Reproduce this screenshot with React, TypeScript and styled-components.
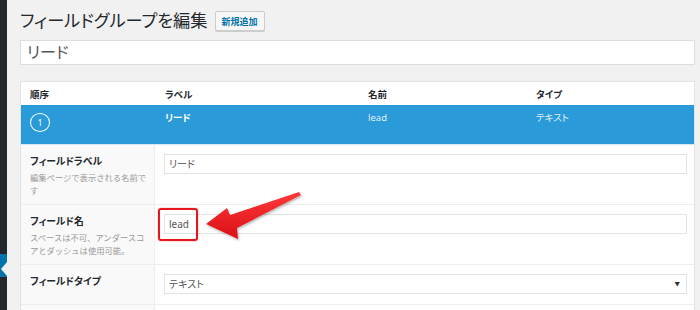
import React from "react";
import styled, { createGlobalStyle } from "styled-components";

const Global = createGlobalStyle`
  html, body { margin: 0; padding: 0; background: #f1f1f1; }
  body {
    font-family: "Noto Sans", "Noto Sans CJK JP", sans-serif;
    font-feature-settings: "palt";
    color: #23282d;
    width: 700px; height: 310px; overflow: hidden;
  }
  * { box-sizing: border-box; }
`;

const Page = styled.div`
  position: relative;
  display: flex;
  width: 700px;
  height: 310px;
  overflow: hidden;
`;

const Sidebar = styled.div`
  width: 7px;
  flex: none;
  background: #23282d;
  display: flex;
  flex-direction: column;
`;

const SideSpacer = styled.div`
  height: 254px;
`;

const SideCurrent = styled.div`
  position: relative;
  height: 23px;
  background: #0073aa;
  &::after {
    content: "";
    position: absolute;
    right: 0;
    top: 8px;
    border-style: solid;
    border-width: 7px 6px 7px 0;
    border-color: transparent #f1f1f1 transparent transparent;
  }
`;

const Main = styled.div`
  flex: 1;
  padding: 10px 5px 0 13px;
  display: flex;
  flex-direction: column;
`;

const TitleRow = styled.div`
  display: flex;
  align-items: center;
  gap: 7px;
  height: 22px;
`;

const Title = styled.h1`
  margin: 0;
  font-size: 17.2px;
  font-weight: 400;
  color: #23282d;
  line-height: 22px;
`;

const AddButton = styled.span`
  display: inline-flex;
  align-items: center;
  justify-content: center;
  height: 20px;
  padding: 0 6px;
  border: 1px solid #cccccc;
  border-radius: 2px;
  background: #f7f7f7;
  color: #0073aa;
  font-size: 9px;
  font-weight: 700;
  box-shadow: 0 1px 0 #ccc;
`;

const TitleInput = styled.div`
  margin-top: 8px;
  height: 26px;
  background: #fff;
  border: 1px solid #dddddd;
  padding: 0 6px;
  font-size: 16px;
  line-height: 23px;
  color: #555;
`;

const Table = styled.div`
  margin-top: 16px;
  background: #fff;
  border: 1px solid #e3e3e3;
  border-bottom: none;
  display: flex;
  flex-direction: column;
`;

const Grid = styled.div<{ $bg?: string; $h: number; $color?: string }>`
  display: grid;
  grid-template-columns: 134px 203px 168px 1fr;
  height: ${(p) => p.$h}px;
  background: ${(p) => p.$bg || "#fff"};
  color: ${(p) => p.$color || "#23282d"};
`;

const HeadCell = styled.div`
  padding-left: 10px;
  font-size: 9.5px;
  font-weight: 700;
  display: flex;
  align-items: center;
  &:first-child { padding-left: 9px; }
`;

const BlueCell = styled.div<{ $bold?: boolean }>`
  padding: 6px 0 0 10px;
  font-size: 9.5px;
  font-weight: ${(p) => (p.$bold ? 700 : 400)};
  line-height: 14px;
  color: ${(p) => (p.$bold ? "#fff" : "rgba(255,255,255,0.88)")};
`;

const OrderCell = styled.div`
  padding: 8px 0 0 9px;
`;

const Circle = styled.div`
  width: 20px;
  height: 19px;
  border: 1.5px solid #fff;
  border-radius: 50%;
  display: flex;
  align-items: center;
  justify-content: center;
  font-size: 9px;
  color: #fff;
`;

const Details = styled.div`
  border-top: 1px solid #d4e9f7;
  display: flex;
  flex-direction: column;
`;

const FieldRow = styled.div<{ $h: number }>`
  display: grid;
  grid-template-columns: 134px 1fr;
  height: ${(p) => p.$h}px;
  border-bottom: 1px solid #eeeeee;
`;

const LabelCol = styled.div<{ $top?: number }>`
  background: #f9f9f9;
  border-right: 1px solid #eeeeee;
  padding: ${(p) => p.$top ?? 10}px 3px 0 9px;
`;

const FieldLabel = styled.div`
  font-size: 9.8px;
  font-weight: 700;
  color: #23282d;
  line-height: 14px;
`;

const FieldDesc = styled.div`
  font-size: 8.3px;
  font-feature-settings: normal;
  color: #999;
  line-height: 13px;
  margin-top: 2px;
`;

const InputCol = styled.div`
  padding: 9px 7px 0 9px;
`;

const TextBox = styled.div`
  height: 20px;
  border: 1px solid #e2e2e2;
  background: #fff;
  padding: 0 4px;
  font-size: 10px;
  line-height: 18px;
  color: #555;
  display: flex;
  align-items: center;
  justify-content: space-between;
`;

const Caret = styled.span`
  font-size: 5.5px;
  color: #333;
  margin-right: 2px;
`;

const Overlay = styled.svg`
  position: absolute;
  left: 0;
  top: 0;
  pointer-events: none;
`;

const Highlight = styled.div`
  position: absolute;
  left: 158px;
  top: 208px;
  width: 40px;
  height: 33px;
  border: 2px solid #e5161d;
  border-radius: 3px;
  box-shadow: 0 0 2px rgba(229, 22, 29, 0.4);
`;

export default function App() {
  return (
    <>
      <Global />
      <Page>
        <Sidebar>
          <SideSpacer />
          <SideCurrent />
        </Sidebar>
        <Main>
          <TitleRow>
            <Title>フィールドグループを編集</Title>
            <AddButton>新規追加</AddButton>
          </TitleRow>
          <TitleInput>リード</TitleInput>
          <Table>
            <Grid $h={23}>
              <HeadCell>順序</HeadCell>
              <HeadCell>ラベル</HeadCell>
              <HeadCell>名前</HeadCell>
              <HeadCell>タイプ</HeadCell>
            </Grid>
            <Grid $h={39} $bg="#2a9bd8" $color="#fff">
              <OrderCell>
                <Circle>1</Circle>
              </OrderCell>
              <BlueCell $bold>リード</BlueCell>
              <BlueCell>lead</BlueCell>
              <BlueCell>テキスト</BlueCell>
            </Grid>
            <Details>
              <FieldRow $h={60}>
                <LabelCol>
                  <FieldLabel>フィールドラベル</FieldLabel>
                  <FieldDesc>編集ページで表示される名前です</FieldDesc>
                </LabelCol>
                <InputCol>
                  <TextBox>リード</TextBox>
                </InputCol>
              </FieldRow>
              <FieldRow $h={60}>
                <LabelCol>
                  <FieldLabel>フィールド名</FieldLabel>
                  <FieldDesc>スペースは不可、アンダースコアとダッシュは使用可能。</FieldDesc>
                </LabelCol>
                <InputCol>
                  <TextBox>lead</TextBox>
                </InputCol>
              </FieldRow>
              <FieldRow $h={40}>
                <LabelCol $top={10}>
                  <FieldLabel>フィールドタイプ</FieldLabel>
                </LabelCol>
                <InputCol>
                  <TextBox>
                    テキスト<Caret>▼</Caret>
                  </TextBox>
                </InputCol>
              </FieldRow>
              <FieldRow $h={40}>
                <LabelCol />
                <InputCol />
              </FieldRow>
            </Details>
          </Table>
        </Main>
        <Highlight />
        <Overlay width="700" height="310" viewBox="0 0 700 310">
          <defs>
            <linearGradient id="arr" x1="0" y1="0" x2="0" y2="1">
              <stop offset="0" stopColor="#ff3a3a" />
              <stop offset="1" stopColor="#d90f16" />
            </linearGradient>
            <filter id="sh" x="-10%" y="-30%" width="130%" height="170%">
              <feDropShadow dx="1" dy="1.5" stdDeviation="1.2" floodColor="#000" floodOpacity="0.3" />
            </filter>
          </defs>
          <polygon
            points="206,224 227,208 230,215 299,192 301,195 237,228 238,239"
            fill="url(#arr)"
            filter="url(#sh)"
          />
        </Overlay>
      </Page>
    </>
  );
}
